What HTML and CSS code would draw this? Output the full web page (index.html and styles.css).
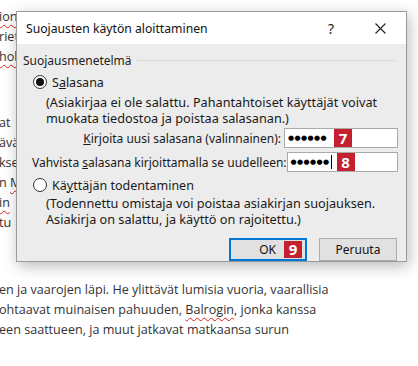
FILE: index.html
```html
<!DOCTYPE html>
<html lang="fi">
<head>
<meta charset="utf-8">
<link rel="stylesheet" href="styles.css">
</head>
<body>
<div class="doc">
  <div class="para top">
    <p class="line"><span class="sq">ion</span></p>
    <p class="line">riet</p>
    <p class="line"><span class="sq">hol</span></p>
  </div>
  <div class="para mid">
    <p class="line">at</p>
    <p class="line">ävä</p>
    <p class="line">kse</p>
    <p class="line">n <span class="sq">M</span></p>
    <p class="line"><span class="sq">in</span></p>
    <p class="line">tu</p>
  </div>
  <div class="para bottom">
    <p class="line">en ja vaarojen läpi. He ylittävät lumisia vuoria, vaarallisia</p>
    <p class="line">ohtaavat muinaisen pahuuden, <span class="sq">Balrogin</span>, jonka kanssa</p>
    <p class="line">een saattueen, ja muut jatkavat matkaansa surun</p>
  </div>
</div>

<div class="dialog">
  <div class="titlebar">
    <span class="title">Suojausten käytön aloittaminen</span>
    <span class="help">?</span>
    <span class="close"><svg width="11" height="11" viewBox="0 0 11 11"><path d="M0.5 0.5L10.5 10.5M10.5 0.5L0.5 10.5" stroke="#222" stroke-width="1.1" fill="none"/></svg></span>
  </div>
  <div class="body">
    <div class="group-head">
      <span>Suojausmenetelmä</span>
      <span class="rule"></span>
    </div>
    <div class="radio-row">
      <span class="radio checked"></span>
      <span>S<u>a</u>lasana</span>
    </div>
    <div class="desc">(Asiakirjaa ei ole salattu. Pahantahtoiset käyttäjät voivat<br>muokata tiedostoa ja poistaa salasanan.)</div>
    <div class="field-row first">
      <span class="field-label right"><u>K</u>irjoita uusi salasana (valinnainen):</span>
      <span class="input"><span class="dots">●●●●●●</span><span class="badge">7</span></span>
    </div>
    <div class="field-row second">
      <span class="field-label">Vahvista <u>s</u>alasana kirjoittamalla se uudelleen:</span>
      <span class="input"><span class="dots">●●●●●●</span><span class="caret"></span><span class="badge">8</span></span>
    </div>
    <div class="radio-row r2">
      <span class="radio"></span>
      <span>Kä<u>y</u>ttäjän todentaminen</span>
    </div>
    <div class="desc d2">(Todennettu omistaja voi poistaa asiakirjan suojauksen.<br>Asiakirja on salattu, ja käyttö on rajoitettu.)</div>
    <div class="buttons">
      <button class="btn ok">OK<span class="badge">9</span></button>
      <button class="btn">Peruuta</button>
    </div>
  </div>
</div>
</body>
</html>
```
FILE: styles.css
```css
* { box-sizing: border-box; }
html, body {
  margin: 0;
  padding: 0;
}
body {
  width: 418px;
  height: 366px;
  overflow: hidden;
  background: #ffffff;
  position: relative;
  font-family: "Noto Sans", "Open Sans", sans-serif;
}
.doc {
  font-family: "Open Sans", "Noto Sans", sans-serif;
  font-size: 12.6px;
  color: #333;
  padding-top: 7px;
}
.line {
  margin: 0;
  line-height: 20px;
  height: 20px;
  white-space: nowrap;
  margin-left: -1px;
}
.para.mid { margin-top: 46px; }
.para.bottom { margin-top: 47px; }
.sq {
  text-decoration: underline wavy #d22;
  text-decoration-thickness: 1px;
  text-underline-offset: 3px;
}

.dialog {
  position: absolute;
  left: 16px;
  top: 11px;
  width: 391px;
  height: 251px;
  background: #ececec;
  border: 1px solid #9a9a9a;
  box-shadow: 2px 4px 14px rgba(0,0,0,0.28);
  font-size: 12px;
  color: #1a1a1a;
}
.titlebar {
  height: 32px;
  background: #fff;
  display: flex;
  align-items: center;
  padding-left: 9px;
}
.title {
  font-size: 12.2px;
  flex: 1;
  color: #111;
}
.help {
  font-size: 14px;
  width: 20px;
  text-align: center;
  color: #222;
}
.close {
  width: 11px;
  display: flex;
  margin-left: 34px;
  margin-right: 20px;
}
.body {
  padding: 8px 6px 0 6px;
}
.group-head {
  display: flex;
  align-items: center;
  height: 16px;
  gap: 5px;
  color: #1e1e1e;
}
.rule {
  flex: 1;
  height: 1px;
  background: #d6d6d6;
  margin-right: 5px;
}
.radio-row {
  display: flex;
  align-items: center;
  gap: 5px;
  margin-top: 6px;
  padding-left: 10px;
  height: 16px;
  font-size: 12.5px;
}
.radio {
  width: 14px;
  height: 14px;
  border: 1px solid #333;
  border-radius: 50%;
  background: #fff;
  display: flex;
  align-items: center;
  justify-content: center;
}
.radio.checked::after {
  content: "";
  width: 8px;
  height: 8px;
  border-radius: 50%;
  background: #111;
}
.desc {
  padding-left: 23px;
  line-height: 16px;
  margin-top: 4px;
  white-space: nowrap;
  font-size: 12.7px;
}
.field-row {
  display: flex;
  align-items: center;
  height: 20px;
  padding-left: 9px;
}
.field-row.first { margin-top: 2px; }
.field-row.second { margin-top: 4px; }
.field-label {
  flex: 1;
  white-space: nowrap;
}
.field-label.right {
  text-align: right;
  padding-right: 3px;
}
.input {
  position: relative;
  width: 114px;
  height: 20px;
  background: #fff;
  border: 1px solid #a9a9a9;
  display: flex;
  align-items: center;
  padding-left: 3px;
  margin-right: 2px;
}
.dots {
  font-family: "DejaVu Sans", sans-serif;
  font-size: 7px;
  letter-spacing: 0.4px;
  color: #000;
  line-height: 1;
}
.caret {
  width: 1px;
  height: 14px;
  background: #000;
  margin-left: 1px;
}
.badge {
  background: #c4202f;
  color: #fff;
  font-family: "Open Sans", "Noto Sans", sans-serif;
  font-weight: 700;
  font-size: 15px;
  width: 18px;
  height: 18px;
  display: flex;
  align-items: center;
  justify-content: center;
  line-height: 1;
}
.input .badge {
  position: absolute;
  left: 49px;
  top: 0px;
}
.r2 { margin-top: 5px; }
.d2 { margin-top: 3px; line-height: 15.5px; }
.buttons {
  display: flex;
  justify-content: flex-end;
  gap: 12px;
  margin-top: 11px;
  padding-right: 3px;
}
.btn {
  width: 78px;
  height: 23px;
  background: #e1e1e1;
  border: 1px solid #adadad;
  font-family: "Noto Sans", sans-serif;
  font-size: 12px;
  color: #111;
  display: flex;
  align-items: center;
  justify-content: center;
  padding: 0;
}
.btn.ok {
  border: 2px solid #0078d7;
  justify-content: flex-end;
  padding-right: 3px;
  gap: 8px;
}
.btn.ok .badge { height: 17px; width: 18px; }
```
